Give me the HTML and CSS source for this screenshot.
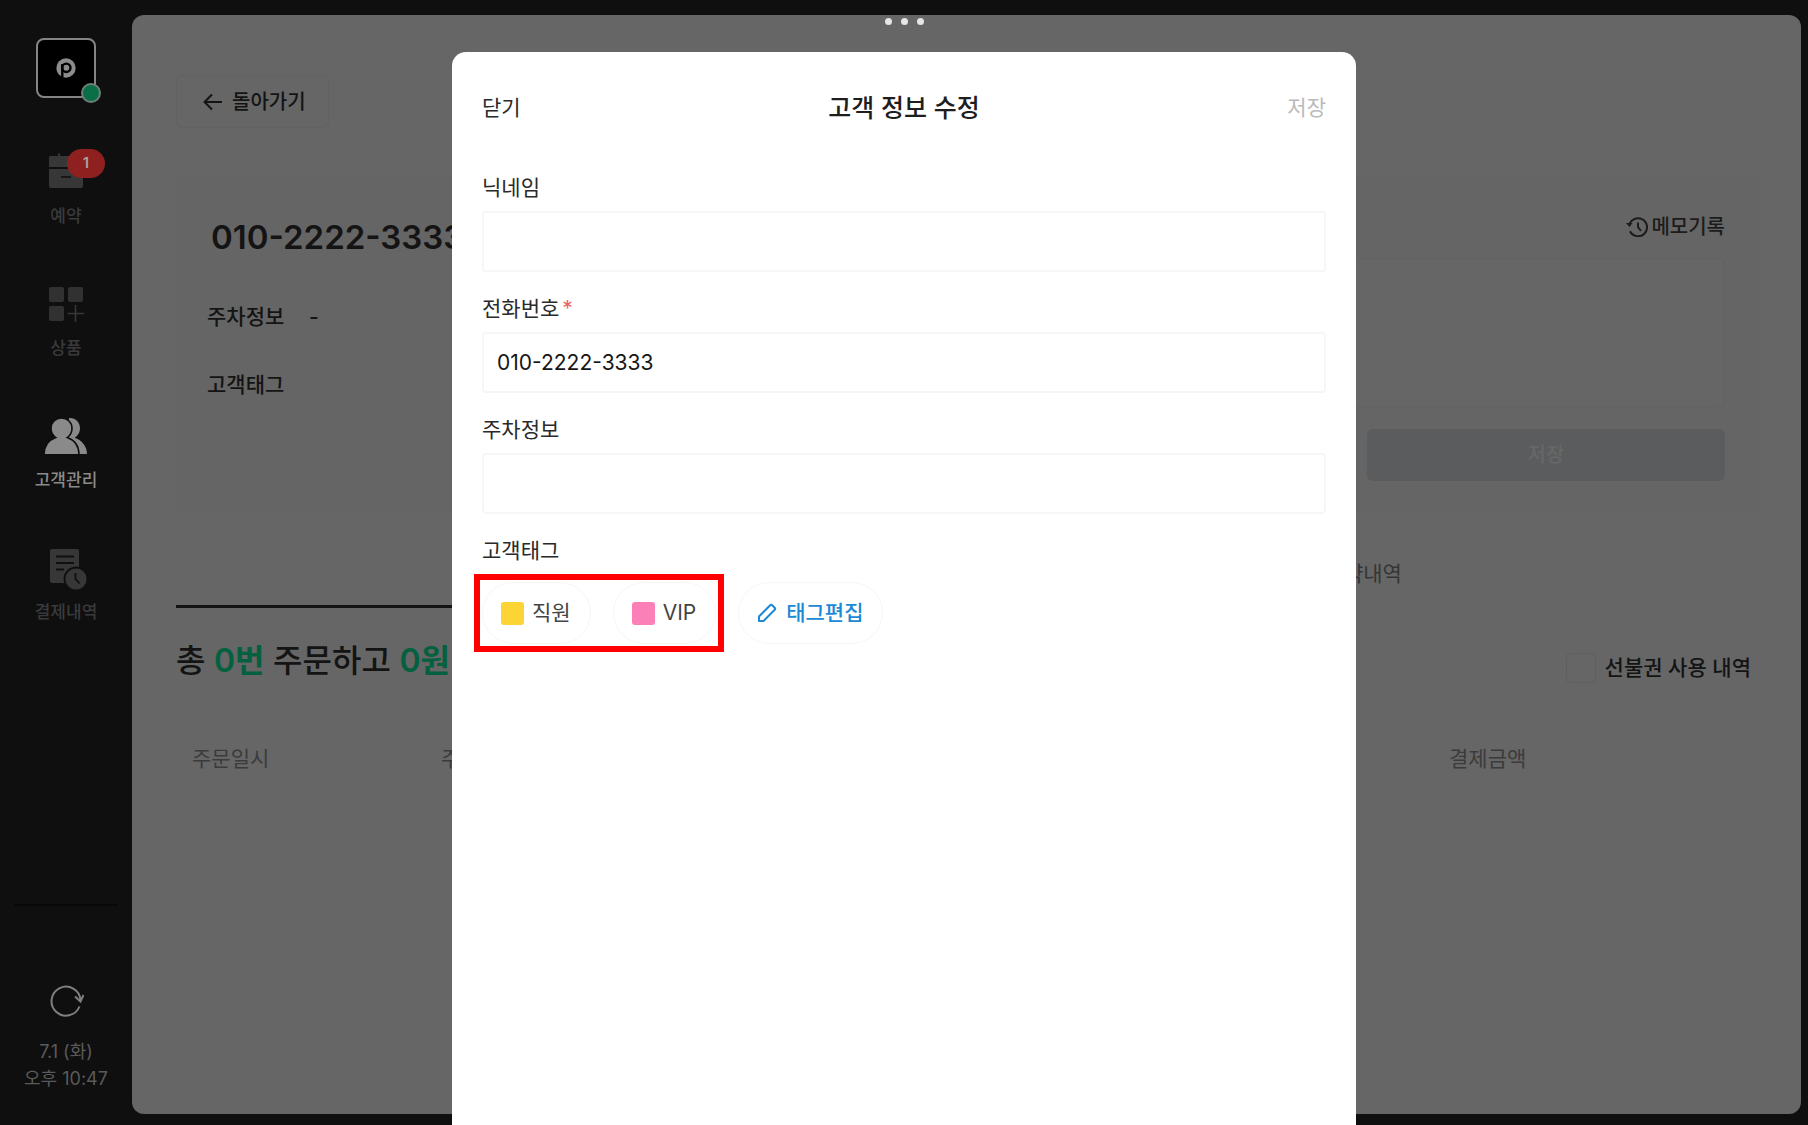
FILE: index.html
```html
<!DOCTYPE html>
<html lang="ko">
<head>
<meta charset="utf-8">
<meta name="viewport" content="width=device-width, initial-scale=1">
<title>고객 정보 수정</title>
<link rel="stylesheet" href="styles.css">
</head>
<body>
<div class="app">
  <aside class="sidebar">
    <a class="logo" href="#" aria-label="홈">
      <svg width="20" height="20" viewBox="0 0 20 20">
        <circle cx="10" cy="10" r="9.7" fill="#8c8c8c"/>
        <path d="M6.3 19.5V6" stroke="#000" stroke-width="2.4" fill="none"/>
        <circle cx="10.3" cy="9.8" r="4.2" fill="none" stroke="#000" stroke-width="2.4"/>
      </svg>
      <span class="status"></span>
    </a>
    <nav class="nav">
      <a class="nav-item" href="#">
        <span class="nav-icon">
          <svg width="44" height="44" viewBox="0 0 44 44" fill="#373737">
            <path d="M6 6h8V3.500h2V6h12V3.500h2V6h8q2 0 2 2v9H5V8q0-2 1-2z"/>
            <path d="M5 19h34v17q0 2-2 2H7q-2 0-2-2z"/>
            <path d="M17 27h10" stroke="#0f0f0f" stroke-width="1.600"/>
          </svg>
          <span class="badge">1</span>
        </span>
        <span>예약</span>
      </a>
      <a class="nav-item" href="#">
        <span class="nav-icon">
          <svg width="44" height="44" viewBox="0 0 44 44" fill="#313131">
            <rect x="5" y="5" width="15" height="15" rx="2"/>
            <rect x="24" y="5" width="15" height="15" rx="2"/>
            <rect x="5" y="24" width="15" height="15" rx="2"/>
            <path d="M31.500 23v17M23.500 31.500h16.500" stroke="#373737" stroke-width="1.600"/>
          </svg>
        </span>
        <span>상품</span>
      </a>
      <a class="nav-item active" href="#">
        <span class="nav-icon">
          <svg width="44" height="44" viewBox="0 0 44 44" fill="#8a8a8a">
            <path d="M25 4c6.500-.5 11 4.200 11 10.200 0 4.500-2.400 7.600-5.400 9.600C37.500 26 43 32 43 40H22z"/>
            <path d="M17.500 4C23.500 4 28 8.500 28 14.300c0 4-2 7.400-4.800 9.300C30 26 35 32 35 40.800H0c0-8.800 5-14.800 11.800-17.200C9 21.700 7 18.300 7 14.300 7 8.500 11.500 4 17.500 4z" stroke="#0f0f0f" stroke-width="1.600"/>
          </svg>
        </span>
        <span>고객관리</span>
      </a>
      <a class="nav-item" href="#">
        <span class="nav-icon">
          <svg width="44" height="44" viewBox="0 0 44 44" fill="#373737">
            <rect x="6" y="3" width="29" height="34" rx="2"/>
            <path d="M12 10.500h18M12 17h18M12 23.500h8" stroke="#0f0f0f" stroke-width="1.800"/>
            <circle cx="32" cy="33" r="11.500" stroke="#0f0f0f" stroke-width="1.800"/>
            <path d="M31.500 27v6l4 4.500" fill="none" stroke="#0f0f0f" stroke-width="1.800"/>
          </svg>
        </span>
        <span>결제내역</span>
      </a>
    </nav>
    <div class="sidebar-foot">
      <button class="refresh" type="button" aria-label="새로고침">
        <svg width="36" height="32" viewBox="0 0 36 32" fill="none" stroke="#808080" stroke-width="2">
          <path d="M31.500 21.500A14.500 14.500 0 1 1 32.500 15"/>
          <path d="M27 11.500l5.500 5 3-6.500"/>
        </svg>
      </button>
      <p class="clock">7.1 (화)<br>오후 10:47</p>
    </div>
  </aside>

  <main class="main">
    <button class="back" type="button">
      <svg width="20" height="18" viewBox="0 0 20 18" fill="none" stroke="#141414" stroke-width="2"><path d="M19 9H2M9 1.500L1.500 9 9 16.500"/></svg>
      돌아가기
    </button>

    <section class="card">
      <div class="profile">
        <h1 class="phone">010-2222-3333</h1>
        <dl class="facts">
          <dt>주차정보</dt><dd>-</dd>
          <dt>고객태그</dt><dd></dd>
        </dl>
      </div>
      <div class="memo">
        <a class="memo-log" href="#">
          <svg width="22" height="20" viewBox="0 0 22 20" fill="none" stroke="#1c1c1c" stroke-width="2">
            <path d="M3.200 8.500A9 9 0 1 1 4 14.300"/>
            <path d="M0 6h6.500L3.500 10z" fill="#1c1c1c" stroke="none"/>
            <path d="M12 5.500V10l3 4"/>
          </svg>
          메모기록
        </a>
        <textarea class="memo-text" aria-label="메모"></textarea>
        <button class="memo-save" type="button">저장</button>
      </div>
    </section>

    <nav class="tabs">
      <a class="tab current" href="#">주문내역</a>
      <a class="tab" href="#">예약내역</a>
    </nav>

    <div class="summary">
      <h2 class="total">총 <em>0번</em> 주문하고 <em>0원</em></h2>
      <label class="check"><input type="checkbox">선불권 사용 내역</label>
    </div>

    <table class="orders">
      <thead><tr><th class="col-date">주문일시</th><th>주문상품</th><th class="col-amount">결제금액</th></tr></thead>
    </table>
  </main>
</div>

<div class="window-dots"><i></i><i></i><i></i></div>

<section class="dialog" role="dialog" aria-labelledby="dialog-title">
  <header class="dialog-head">
    <button class="text-btn" type="button">닫기</button>
    <h2 id="dialog-title">고객 정보 수정</h2>
    <button class="text-btn save" type="button">저장</button>
  </header>
  <form class="form">
    <div class="field">
      <label for="nick">닉네임</label>
      <input id="nick" type="text">
    </div>
    <div class="field">
      <label for="phone">전화번호<span class="required">*</span></label>
      <input id="phone" type="tel" value="010-2222-3333">
    </div>
    <div class="field">
      <label for="parking">주차정보</label>
      <input id="parking" type="text">
    </div>
    <div class="field tags-field">
      <span class="label">고객태그</span>
      <div class="tags">
        <div class="tag-group">
          <button class="chip" type="button"><span class="swatch yellow"></span>직원</button>
          <button class="chip" type="button"><span class="swatch pink"></span>VIP</button>
        </div>
        <button class="chip edit" type="button">
          <svg width="20" height="20" viewBox="0 0 20 20" fill="none" stroke="#1b8ad6" stroke-width="2" stroke-linejoin="round"><path d="M2 13.500L13.200 2.300q1-1 2 0l2.500 2.500q1 1 0 2L6.500 18H2z"/></svg>
          태그편집
        </button>
      </div>
    </div>
  </form>
</section>
</body>
</html>
```

FILE: styles.css
```css
* { box-sizing: border-box; }

body {
  margin: 0;
  background: #0f0f0f;
  color: #141414;
  font-family: Inter, "Noto Sans CJK KR", sans-serif;
  font-size: 21px;
  font-weight: 500;
  line-height: 30px;
}

button, input, textarea { font: inherit; color: inherit; margin: 0; }
button { background: none; border: 0; padding: 0; cursor: pointer; }
a { color: inherit; text-decoration: none; }
h1, h2, p, dl, dd { margin: 0; }
svg { display: block; flex: none; }

.app { display: flex; min-height: 100vh; }

/* Sidebar */
.sidebar {
  flex: none;
  width: 132px;
  display: flex;
  flex-direction: column;
  align-items: center;
  padding: 38px 0 33px;
}
.logo {
  position: relative;
  display: flex;
  align-items: center;
  justify-content: center;
  width: 60px;
  height: 60px;
  border: 2px solid #858585;
  border-radius: 8px;
  background: #000;
}
.status {
  position: absolute;
  right: -7px;
  bottom: -7px;
  width: 20px;
  height: 20px;
  border: 2px solid #6f7f78;
  border-radius: 50%;
  background: #0a6f47;
}
.nav {
  display: flex;
  flex-direction: column;
  gap: 54px;
  margin-top: 52px;
}
.nav-item {
  display: flex;
  flex-direction: column;
  align-items: center;
  gap: 10px;
  color: #3a3a3c;
  font-size: 17px;
  line-height: 24px;
}
.nav-item.active { color: #8a8a8a; }
.nav-icon { position: relative; }
.badge {
  position: absolute;
  top: -1px;
  left: 23px;
  width: 38px;
  height: 29px;
  border-radius: 15px;
  background: #8e2020;
  color: #a9a0a0;
  font-size: 15px;
  font-weight: 600;
  line-height: 28px;
  text-align: center;
}
.sidebar-foot {
  display: flex;
  flex-direction: column;
  align-items: center;
  gap: 21px;
  width: 104px;
  margin-top: auto;
  padding-top: 79px;
  border-top: 2px solid #080808;
}
.clock {
  color: #5a5a5a;
  font-size: 18px;
  font-weight: 400;
  line-height: 27px;
  text-align: center;
}

/* Customer page */
.main {
  flex: 1;
  min-width: 0;
  margin: 15px 7px 11px 0;
  padding: 60px 42px 0 44px;
  border-radius: 12px;
  background: #666;
}
.back {
  display: flex;
  align-items: center;
  gap: 9px;
  height: 53px;
  padding: 0 22px 0 26px;
  border: 1px solid #626262;
  border-radius: 6px;
  font-size: 20px;
}
.card {
  display: flex;
  justify-content: space-between;
  height: 336px;
  margin-top: 48px;
  padding: 36px 34px 31px 31px;
  border-radius: 8px;
  background: #656565;
}
.phone {
  padding: 0 4px;
  font-size: 33px;
  font-weight: 600;
  line-height: 50px;
}
.facts {
  display: grid;
  grid-template-columns: 78px auto;
  gap: 38px 24px;
  margin-top: 40px;
}
.memo {
  display: flex;
  flex-direction: column;
  align-items: flex-end;
  width: 520px;
}
.memo-log {
  display: flex;
  align-items: center;
  gap: 3px;
  color: #1c1c1c;
  font-size: 20px;
}
.memo-text {
  width: 100%;
  height: 149px;
  margin: 16px 0 22px;
  border: 1px solid #626262;
  border-radius: 6px;
  background: #666;
  resize: none;
}
.memo-save {
  width: 358px;
  height: 52px;
  border-radius: 6px;
  background: #5b5c5d;
  color: #676767;
  font-size: 20px;
}
.tabs { display: flex; margin-top: 24px; }
.tab {
  flex: 1;
  height: 72px;
  padding-top: 23px;
  color: #353535;
  font-weight: 400;
  text-align: center;
}
.tab.current { border-bottom: 3px solid #141414; color: #141414; font-weight: 600; }
.summary {
  display: flex;
  align-items: center;
  justify-content: space-between;
  height: 60px;
  margin-top: 23px;
  padding-right: 8px;
}
.total { font-size: 32px; font-weight: 500; line-height: 46px; }
.total em { color: #04603f; font-style: normal; font-weight: 600; }
.check { display: flex; align-items: center; gap: 9px; padding-top: 14px; }
.check input {
  appearance: none;
  width: 30px;
  height: 30px;
  border: 1px solid #5f5f5f;
  border-radius: 4px;
}
.orders {
  width: 100%;
  margin-top: 38px;
  border-collapse: collapse;
  table-layout: fixed;
}
.orders th {
  height: 60px;
  padding: 0 16px;
  color: #3b3b3b;
  font-weight: 400;
  text-align: left;
}
.orders .col-date { width: 249px; }
.orders .col-amount { width: 326px; }

/* Window handle */
.window-dots {
  position: absolute;
  top: 18px;
  left: 0;
  right: 0;
  display: flex;
  justify-content: center;
  gap: 9px;
}
.window-dots i { width: 7px; height: 7px; border-radius: 50%; background: #e6e6e6; }

/* Dialog */
.dialog {
  position: absolute;
  top: 52px;
  bottom: 0;
  left: 25%;
  right: 25%;
  padding: 0 30px;
  border-radius: 14px 14px 0 0;
  background: #fff;
  color: #2a2a2a;
  font-weight: 400;
}
.dialog-head {
  display: flex;
  align-items: center;
  justify-content: space-between;
  height: 112px;
}
.dialog-head h2 { color: #1e1e1e; font-size: 25px; font-weight: 500; line-height: 36px; }
.text-btn.save { color: #bababa; }
.form { display: flex; flex-direction: column; gap: 22px; padding-top: 9px; }
.field { display: flex; flex-direction: column; gap: 8px; }
.field input {
  width: 100%;
  height: 61px;
  padding: 0 13px;
  border: 2px solid #f6f6f6;
  border-radius: 4px;
  background: #fff;
  color: #161616;
}
.required { margin-left: 3px; color: #e8625f; }
.tags-field { gap: 16px; }
.tags, .tag-group { display: flex; gap: 22px; }
.tag-group { position: relative; }
.tag-group::after {
  content: "";
  position: absolute;
  inset: -8px;
  border: 6px solid #f00;
  pointer-events: none;
}
.chip {
  display: flex;
  align-items: center;
  gap: 8px;
  height: 62px;
  padding: 0 19px 0 18px;
  border: 1px solid #f6f6f6;
  border-radius: 31px;
  color: #444;
}
.swatch { width: 23px; height: 23px; border-radius: 3px; }
.yellow { background: #fdd436; }
.pink { background: #fb80b7; }
.chip.edit { gap: 9px; color: #1b8ad6; font-weight: 500; }
```
